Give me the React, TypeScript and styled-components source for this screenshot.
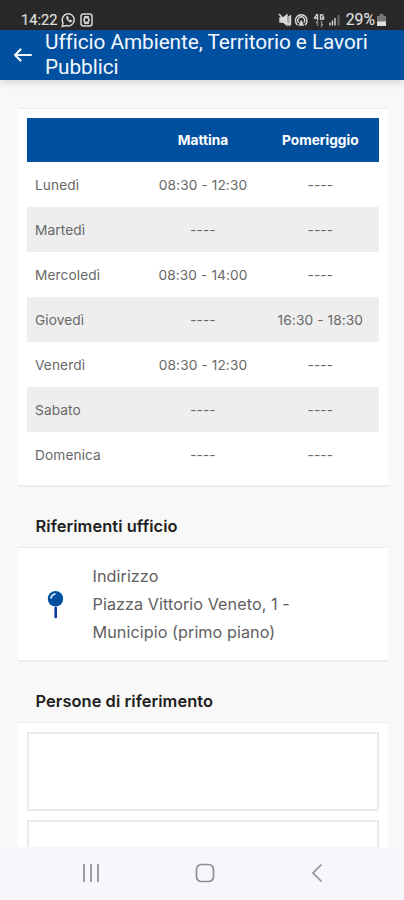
import React from "react";
import styled, { createGlobalStyle } from "styled-components";

const BLUE = "#01509f";

const GlobalStyle = createGlobalStyle`
  * { box-sizing: border-box; }
  body { margin: 0; background: #f8f8f8; font-family: Inter, Roboto, sans-serif; }
`;

const Screen = styled.div`
  display: flex;
  flex-direction: column;
  height: 900px;
  overflow: hidden;
  background: #f8f8f8;
`;

const StatusBar = styled.div`
  flex: none;
  display: flex;
  justify-content: space-between;
  height: 30px;
  padding: 9px 18px 0 21px;
  background: #292929;
  color: #dedede;
`;

const StatusGroup = styled.div<{ $gap: number }>`
  display: flex;
  align-items: center;
  gap: ${(p) => p.$gap}px;
  height: 21px;
`;

const StatusText = styled.span<{ $size: number }>`
  font: 400 ${(p) => p.$size}px/20px Roboto, sans-serif;
  -webkit-text-stroke: 0.2px currentColor;
`;

const AppBar = styled.header`
  flex: none;
  display: flex;
  align-items: center;
  height: 50px;
  padding-left: 13px;
  background: ${BLUE};
  color: #f2f7fd;
  box-shadow: 0 2px 8px rgba(0, 0, 0, 0.16);
`;

const BackIcon = styled.svg`
  flex: none;
  width: 20px;
  height: 16px;
  margin-right: 12px;
`;

const AppTitle = styled.h1`
  margin: 0;
  font: 400 20.8px/25.5px Roboto, sans-serif;
  letter-spacing: -0.07px;
`;

const Content = styled.main`
  flex: 1;
  min-height: 0;
  overflow: hidden;
  padding: 28px 16px 0 18px;
`;

const Card = styled.section<{ $height: number; $padTop?: number }>`
  height: ${(p) => p.$height}px;
  padding: ${(p) => p.$padTop ?? 9}px 9px 0;
  background: #fff;
  border-top: 1px solid #ececec;
  border-bottom: 2px solid #ededed;
`;

const Timetable = styled.table`
  width: 352px;
  table-layout: fixed;
  border-collapse: collapse;
  color: #686868;
  font-size: 13.7px;
  text-align: center;
`;

const HeadCell = styled.th`
  height: 44px;
  padding: 0;
  background: ${BLUE};
  color: #fff;
  font-weight: 700;
`;

const Row = styled.tr`
  height: 45px;
  &:nth-child(even) { background: #eee; }
`;

const Day = styled.td`
  padding: 0 0 0 8px;
  text-align: left;
  letter-spacing: 0.1px;
`;

const Hours = styled.td`
  padding: 0;
  letter-spacing: 0.1px;
`;

const SectionTitle = styled.h2`
  height: 60px;
  margin: 0;
  padding: 26px 0 0 17.5px;
  color: #202020;
  font-size: 16.4px;
  line-height: 26px;
  font-weight: 600;
  letter-spacing: 0.08px;
`;

const Address = styled.div`
  display: flex;
  color: #606060;
  font-size: 16.2px;
  line-height: 28px;
  letter-spacing: 0.06px;
`;

const Pin = styled.svg`
  width: 20px;
  height: 30px;
  margin: 28px 26.5px 0 19px;
`;

const PersonBox = styled.div`
  height: 79px;
  margin-bottom: 9px;
  border: 2px solid #ebebeb;
  background: #fff;
`;

const NavBar = styled.nav`
  flex: none;
  display: flex;
  justify-content: space-between;
  align-items: center;
  height: 53px;
  padding: 0 77px 2px 80px;
  background: #f6f7fa;
`;

const schedule: [string, string, string][] = [
  ["Lunedì", "08:30 - 12:30", "----"],
  ["Martedì", "----", "----"],
  ["Mercoledì", "08:30 - 14:00", "----"],
  ["Giovedì", "----", "16:30 - 18:30"],
  ["Venerdì", "08:30 - 12:30", "----"],
  ["Sabato", "----", "----"],
  ["Domenica", "----", "----"],
];

function MessagingIcons() {
  return (
    <svg width="32" height="16" viewBox="0 0 32 16" fill="none" stroke="#d8d8d8" strokeWidth="1.5">
      <path d="M1.200 14.500l.8-3.700A6 6 0 1 1 5.200 13.500z" />
      <path d="M5.500 4.500c-1 1.500 1.500 5.500 4.500 5.800l1.300-1.300-1.700-1.200-1 .8-1.600-1.700.7-1L6.800 4.200z" fill="#d8d8d8" strokeWidth=".4" />
      <rect x="20" y="2" width="11" height="12" rx="2.500" />
      <circle cx="25.500" cy="8" r="2.500" />
      <path d="M23 4.600h5M23 11.600h5" strokeWidth="1" />
    </svg>
  );
}

function SignalIcons() {
  return (
    <svg width="63" height="16" viewBox="0 0 63 16" fill="none" stroke="#d8d8d8" strokeWidth="1.400">
      <path d="M2 6h3l4-3v10l-4-3H2z" fill="#d8d8d8" />
      <path d="M1 2l11 12M11 4v8M12.500 3v10" />
      <path d="M19.500 13A5.800 5.800 0 1 1 27 13M20.800 10.800A3.400 3.400 0 1 1 25.700 10.800" />
      <path d="M23.200 8l-2.500 5.500h5z" fill="#d8d8d8" strokeWidth=".5" />
      <path d="M39 2l-2.500 4H40M39.500 2v6M45.500 3h-3v4h3V5h-1.500" strokeWidth="1.300" />
      <path d="M39.500 14V9l-1.500 2M43.500 9v5l1.500-2" stroke="#858585" />
      <path d="M52 13.500v-3M54.500 13.500V8.500M57 13.500V6" />
      <path d="M60.500 13.500V3" stroke="#686868" strokeWidth="2" />
    </svg>
  );
}

export default function App() {
  return (
    <>
      <GlobalStyle />
      <Screen>
        <StatusBar>
          <StatusGroup $gap={4}>
            <StatusText $size={14.6}>14:22</StatusText>
            <MessagingIcons />
          </StatusGroup>
          <StatusGroup $gap={5}>
            <SignalIcons />
            <StatusGroup $gap={2}>
              <StatusText $size={15.8}>29%</StatusText>
              <svg width="9" height="14" viewBox="0 0 9 14">
                <path d="M2.500 1h4v2H9v6H0V3h2.500z" fill="#777" />
                <path d="M0 8.500h9V13H0z" fill="#e2e2e2" />
              </svg>
            </StatusGroup>
          </StatusGroup>
        </StatusBar>
        <AppBar>
          <BackIcon viewBox="0 0 20 16" fill="none" stroke="currentColor" strokeWidth="2.200" strokeLinecap="round" strokeLinejoin="round">
            <path d="M18 8H2M7.500 2.500L2 8l5.500 5.500" />
          </BackIcon>
          <AppTitle>
            Ufficio Ambiente, Territorio e Lavori
            <br />
            Pubblici
          </AppTitle>
        </AppBar>
        <Content>
          <Card $height={379}>
            <Timetable>
              <thead>
                <tr>
                  <HeadCell />
                  <HeadCell>Mattina</HeadCell>
                  <HeadCell>Pomeriggio</HeadCell>
                </tr>
              </thead>
              <tbody>
                {schedule.map(([day, morning, afternoon]) => (
                  <Row key={day}>
                    <Day>{day}</Day>
                    <Hours>{morning}</Hours>
                    <Hours>{afternoon}</Hours>
                  </Row>
                ))}
              </tbody>
            </Timetable>
          </Card>
          <SectionTitle>Riferimenti ufficio</SectionTitle>
          <Card $height={115} $padTop={14}>
            <Address>
              <Pin viewBox="0 0 20 30">
                <circle cx="9.500" cy="8.800" r="7.700" fill="#01509f" />
                <path d="M5 8a5 5 0 0 1 4-4" stroke="#d8eaff" strokeWidth="1.700" fill="none" strokeLinecap="round" />
                <path d="M9.700 18v9" stroke="#0c379f" strokeWidth="2.600" strokeLinecap="round" />
              </Pin>
              <div>
                Indirizzo
                <br />
                Piazza Vittorio Veneto, 1 -
                <br />
                Municipio (primo piano)
              </div>
            </Address>
          </Card>
          <SectionTitle>Persone di riferimento</SectionTitle>
          <Card $height={200}>
            <PersonBox />
            <PersonBox />
          </Card>
        </Content>
        <NavBar>
          <svg width="22" height="20" viewBox="0 0 22 20" stroke="#8e8e91" strokeWidth="1.700">
            <path d="M4 1v18M11 1v18M18 1v18" />
          </svg>
          <svg width="20" height="20" viewBox="0 0 20 20" fill="none" stroke="#8e8e91" strokeWidth="1.700">
            <rect x="1.500" y="1.500" width="17" height="17" rx="5" />
          </svg>
          <svg width="20" height="20" viewBox="0 0 20 20" fill="none" stroke="#8e8e91" strokeWidth="1.600">
            <path d="M14.500 1.500L6 10l8.500 8.500" />
          </svg>
        </NavBar>
      </Screen>
    </>
  );
}
